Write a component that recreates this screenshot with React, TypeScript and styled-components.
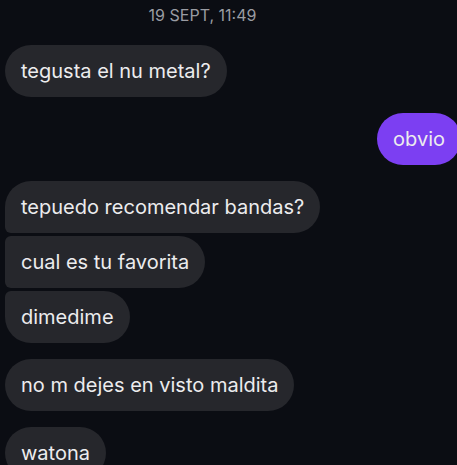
import React from "react";
import styled, { createGlobalStyle } from "styled-components";

const Global = createGlobalStyle`
  html, body { margin: 0; padding: 0; background: #0b0d13; }
  body { font-family: Inter, "Noto Sans", sans-serif; overflow: hidden; }
`;

const Screen = styled.div`
  width: 457px;
  height: 465px;
  overflow: hidden;
  background: #0b0d13;
  display: flex;
  flex-direction: column;
  padding: 0 0 0 5px;
  box-sizing: border-box;
  & > * { flex-shrink: 0; }
`;

const Stamp = styled.div`
  height: 45px;
  padding-top: 6px;
  box-sizing: border-box;
  text-align: center;
  color: #9a9ca2;
  font-size: 16px;
  line-height: 19px;
  margin-right: 57px;
`;

const Group = styled.div<{ $mine?: boolean }>`
  display: flex;
  flex-direction: column;
  align-items: ${(p) => (p.$mine ? "flex-end" : "flex-start")};
  gap: 3px;
  margin-bottom: 16px;
  margin-right: ${(p) => (p.$mine ? "-4px" : "0")};
`;

type Pos = "single" | "first" | "middle" | "last";

const Bubble = styled.div<{ $mine?: boolean; $pos: Pos }>`
  height: 52px;
  box-sizing: border-box;
  display: flex;
  align-items: center;
  padding: 0 16px;
  font-size: 20px;
  color: #ececee;
  background: ${(p) => (p.$mine ? "#7c3ff2" : "#26272c")};
  border-radius: 26px;
  ${(p) =>
    p.$pos === "first"
      ? "border-bottom-left-radius: 6px;"
      : p.$pos === "middle"
      ? "border-top-left-radius: 6px; border-bottom-left-radius: 6px;"
      : p.$pos === "last"
      ? "border-top-left-radius: 6px;"
      : ""}
`;

const groups: { mine?: boolean; msgs: string[] }[] = [
  { msgs: ["tegusta el nu metal?"] },
  { mine: true, msgs: ["obvio"] },
  { msgs: ["tepuedo recomendar bandas?", "cual es tu favorita", "dimedime"] },
  { msgs: ["no m dejes en visto maldita"] },
  { msgs: ["watona"] },
];

const posOf = (i: number, n: number): Pos =>
  n === 1 ? "single" : i === 0 ? "first" : i === n - 1 ? "last" : "middle";

export default function App() {
  return (
    <>
      <Global />
      <Screen>
        <Stamp>19 SEPT, 11:49</Stamp>
        {groups.map((g, gi) => (
          <Group key={gi} $mine={g.mine}>
            {g.msgs.map((m, i) => (
              <Bubble key={i} $mine={g.mine} $pos={posOf(i, g.msgs.length)}>
                {m}
              </Bubble>
            ))}
          </Group>
        ))}
      </Screen>
    </>
  );
}
